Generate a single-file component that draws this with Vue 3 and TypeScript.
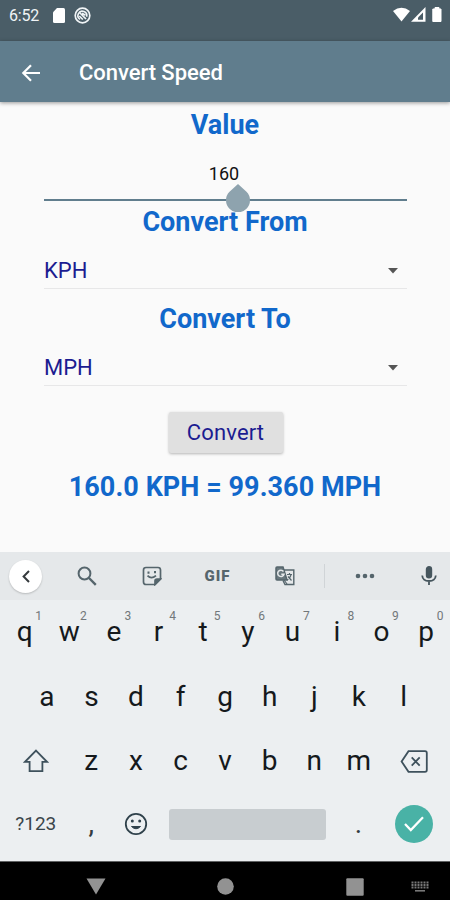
<script setup lang="ts">
import { ref } from 'vue'

interface Key {
  label: string
  hint?: string
}

const value = ref<string>('160')
const fromUnit = ref<string>('KPH')
const toUnit = ref<string>('MPH')
const result = ref<string>('160.0 KPH = 99.360 MPH')

const topRow: Key[] = [...'qwertyuiop'].map((label, i) => ({ label, hint: String((i + 1) % 10) }))
const homeRow: Key[] = [...'asdfghjkl'].map((label) => ({ label }))
const bottomRow: Key[] = [...'zxcvbnm'].map((label) => ({ label }))
</script>

<template>
  <div class="phone">
    <header class="status">
      <span class="clock">6:52</span>
      <svg class="sd" width="12" height="15" viewBox="0 0 12 15"><path d="M4 0h6.5Q12 0 12 1.500v12Q12 15 10.500 15h-9Q0 15 0 13.500V4.200z" fill="#fff" /></svg>
      <svg class="dnd" width="17" height="17" viewBox="0 0 17 17" fill="none" stroke="#f1f5f7">
        <circle cx="8.500" cy="8.500" r="7.300" stroke-width="1.700" />
        <path d="M6 12.300A4.400 4.400 0 1 1 12.600 9.800" stroke-width="1.600" />
        <path d="M5.500 5.500l6.500 6.500M8 6.300l3.500 2M5.300 9l3.500 3.500" stroke-width="1.700" />
      </svg>
      <span class="spacer"></span>
      <svg class="signals" width="50" height="16" viewBox="0 0 50 16">
        <path d="M0 4Q8.500-2.500 17 4L8.500 14.500z" fill="#fff" />
        <path d="M18 14.800L32.500 0v14.800z" fill="#fff" />
        <path d="M25 12.800V10.500l5-5v7.300z" fill="#4a5d67" />
        <path d="M39.800 2h2.200V.5h4V2H48v12.500h-8.200z" fill="#fff" stroke="#fff" stroke-linejoin="round" />
      </svg>
    </header>

    <div class="toolbar">
      <svg width="20" height="20" viewBox="0 0 20 20" fill="none" stroke="#fff" stroke-width="2.200"><path d="M19 10H2.500M10 2.200L2.300 10l7.700 7.800" /></svg>
      <h1>Convert Speed</h1>
    </div>

    <main class="form">
      <h2>Value</h2>
      <div class="input">
        <span>{{ value }}</span>
        <svg class="handle" width="24" height="28" viewBox="0 0 24 28"><path d="M12 0L20.500 7.800A12 12 0 1 1 3.500 7.800z" fill="#8ea3ae" /></svg>
      </div>
      <h2>Convert From</h2>
      <div class="select from">
        <span>{{ fromUnit }}</span>
        <svg width="10" height="6" viewBox="0 0 10 6"><path d="M0 0h10L5 5.500z" fill="#555" /></svg>
      </div>
      <h2>Convert To</h2>
      <div class="select">
        <span>{{ toUnit }}</span>
        <svg width="10" height="6" viewBox="0 0 10 6"><path d="M0 0h10L5 5.500z" fill="#555" /></svg>
      </div>
      <button class="convert" type="button">Convert</button>
      <p class="result">{{ result }}</p>
    </main>

    <section class="suggestions">
      <div class="tool collapse">
        <span class="bubble">
          <svg width="8" height="13" viewBox="0 0 8 13" fill="none" stroke="#353a3d" stroke-width="2"><path d="M7 1L1.600 6.500 7 12" /></svg>
        </span>
      </div>
      <div class="tool search">
        <svg width="20" height="20" viewBox="0 0 20 20" fill="none" stroke="#55656c" stroke-width="2"><circle cx="7.500" cy="7.500" r="5.900" /><path d="M12 12l6.800 6.800" stroke-width="2.400" /></svg>
      </div>
      <div class="tool sticker">
        <svg width="20" height="20" viewBox="0 0 20 20" fill="none" stroke="#55656c" stroke-width="1.700">
          <path d="M4 1.500h12Q18.500 1.500 18.500 4v9l-5.500 5.500H4Q1.500 18.500 1.500 16V4Q1.500 1.500 4 1.500z" />
          <path d="M13 18.500v-3.500q0-2 2-2h3.500z" fill="#55656c" />
          <path d="M5.500 9.700q3.800 4 8.500 0" />
          <path d="M6.500 5.500v2.200M13 5v2.200" stroke-width="2" />
        </svg>
      </div>
      <div class="tool gif">GIF</div>
      <div class="tool translate">
        <svg width="20" height="20" viewBox="0 0 20 20" fill="none" stroke="#55656c">
          <path d="M8.500 4H18.800V18.500H10L8 14.500" stroke-width="1.400" />
          <path d="M2 1h6l4 13H2Q1 14 1 13V2Q1 1 2 1z" fill="#68777d" stroke-width="1.500" />
          <path d="M8.500 5.500A3.200 3.200 0 1 0 9 8.200H6.300" stroke="#e5e8ea" stroke-width="1.500" />
          <path d="M12 8.500h5M14.500 7v1.500M16 9q-1 3.500-4 5M13 10.500l3.500 4M9 14l3 4" stroke-width="1.200" />
        </svg>
      </div>
      <span class="divider"></span>
      <div class="tool more">
        <svg width="20" height="6" viewBox="0 0 20 6" fill="#55656c"><circle cx="3" cy="3" r="2.300" /><circle cx="10" cy="3" r="2.300" /><circle cx="17" cy="3" r="2.300" /></svg>
      </div>
      <div class="tool mic">
        <svg width="16" height="20" viewBox="0 0 16 20" fill="none" stroke="#46565e" stroke-width="1.800"><rect x="5.700" y="1" width="4.600" height="10.500" rx="2.300" fill="#46565e" /><path d="M1.200 9.500q.5 5.500 6.800 5.500t6.800-5.500M8 15v4" /></svg>
      </div>
    </section>

    <section class="keyboard">
      <div class="row">
        <div v-for="key in topRow" :key="key.label" class="key">
          {{ key.label }}<sup>{{ key.hint }}</sup>
        </div>
      </div>
      <div class="row home">
        <div v-for="key in homeRow" :key="key.label" class="key">{{ key.label }}</div>
      </div>
      <div class="row">
        <div class="key wide">
          <svg width="26" height="24" viewBox="0 0 26 24" fill="none" stroke="#3e515c" stroke-width="1.800"><path d="M13 1.600L24 12.800h-4.600v9.400H6.600v-9.400H2z" /></svg>
        </div>
        <div v-for="key in bottomRow" :key="key.label" class="key">{{ key.label }}</div>
        <div class="key wide">
          <svg class="delete" width="28" height="23" viewBox="0 0 28 23" fill="none" stroke="#3e515c" stroke-width="1.800"><path d="M8.500 1.200H25q1.800 0 1.800 1.800v17q0 1.800-1.800 1.800H8.500L1.600 11.500zM11.700 7.300l8 8.400M19.700 7.300l-8 8.400" /></svg>
        </div>
      </div>
      <div class="row last">
        <div class="key wide symbols">?123</div>
        <div class="key comma">,</div>
        <div class="key">
          <svg width="24" height="24" viewBox="0 0 24 24" fill="none" stroke="#2f414b" stroke-width="1.800"><circle cx="12" cy="12" r="10.200" /><path d="M7.500 14.500q4.500 4.500 9 0z" fill="#2f414b" stroke-width="1" /><circle cx="8.300" cy="9" r="1.500" fill="#2f414b" stroke="none" /><circle cx="15.700" cy="9" r="1.500" fill="#2f414b" stroke="none" /></svg>
        </div>
        <div class="space"><span></span></div>
        <div class="key period">.</div>
        <div class="key wide">
          <span class="enter">
            <svg width="20" height="16" viewBox="0 0 20 16" fill="none" stroke="#fff" stroke-width="2.300"><path d="M1 8l5.800 6L19 1.300" /></svg>
          </span>
        </div>
      </div>
    </section>

    <nav class="navbar">
      <svg class="back" width="20" height="17" viewBox="0 0 20 17"><path d="M.5.500h19L10 16.500z" fill="#929292" /></svg>
      <svg class="home-btn" width="17" height="17" viewBox="0 0 17 17"><circle cx="8.500" cy="8.500" r="8.300" fill="#929292" /></svg>
      <svg class="recent" width="18" height="18" viewBox="0 0 18 18"><rect x=".3" y=".3" width="17.400" height="17.400" rx="1" fill="#929292" /></svg>
      <svg class="ime" width="18" height="11" viewBox="0 0 18 11" stroke="#777" fill="none"><path d="M.5 1.500h17M.5 4h17M.5 6.500h17" stroke-width="1.800" stroke-dasharray="2 1" /><path d="M4 9.800h10" stroke-width="1.600" /></svg>
    </nav>
  </div>
</template>

<style>
body {
  margin: 0;
  overflow: hidden;
}
</style>

<style scoped>
.phone {
  width: 450px;
  height: 900px;
  display: flex;
  flex-direction: column;
  background: #fafafa;
  font-family: Roboto, sans-serif;
  overflow: hidden;
}
svg {
  display: block;
  flex: none;
}
.status {
  height: 41px;
  flex: none;
  box-sizing: border-box;
  padding: 7px 8px 0 9px;
  display: flex;
  align-items: flex-start;
  background: #4a5d67;
}
.clock {
  width: 44px;
  font-size: 16px;
  line-height: 18px;
  letter-spacing: -0.2px;
  color: #f0f4f6;
}
.sd {
  margin-top: 1px;
}
.dnd {
  margin-left: 9px;
}
.spacer {
  flex: 1;
}
.signals {
  margin-right: -1px;
}
.toolbar {
  height: 61px;
  flex: none;
  z-index: 1;
  display: flex;
  align-items: center;
  padding: 2px 0 0 21px;
  box-sizing: border-box;
  gap: 38px;
  background: #607d8d;
  box-shadow: 0 1px 4px rgba(0, 0, 0, 0.4);
}
h1 {
  margin: 0;
  font-size: 22px;
  font-weight: 500;
  line-height: 28px;
  letter-spacing: -0.05px;
  color: #fff;
}
.form {
  height: 450px;
  flex: none;
  box-sizing: border-box;
  padding: 6px 43px 0 44px;
  display: flex;
  flex-direction: column;
}
h2,
.result {
  margin: 0 0 0 -1px;
  text-align: center;
  font-size: 27px;
  line-height: 34px;
  font-weight: 700;
  color: #1168cb;
  white-space: nowrap;
}
.result {
  letter-spacing: 0.06px;
}
.input {
  height: 59px;
  margin-bottom: 4px;
  box-sizing: border-box;
  border-bottom: 2px solid #607d8d;
  text-align: center;
  padding: 21px 3px 0 0;
  font-size: 18px;
  line-height: 22px;
  letter-spacing: 0.1px;
  color: #111;
  position: relative;
}
.handle {
  position: absolute;
  left: 182px;
  top: 42px;
}
.select {
  height: 50px;
  box-sizing: border-box;
  border-bottom: 1px solid #e7e7e8;
  display: flex;
  justify-content: space-between;
  align-items: center;
  padding: 14px 9px 0 0;
  font-size: 22px;
  color: #1c1c91;
}
.from {
  margin-bottom: 13px;
}
.convert {
  align-self: center;
  width: 114px;
  height: 41px;
  margin: 26px 0 17px;
  padding: 0;
  border: 0;
  border-radius: 2px;
  background: #e0e0e0;
  box-shadow: 0 1px 3px rgba(0, 0, 0, 0.28);
  font: 400 22px/41px Roboto, sans-serif;
  letter-spacing: 0.15px;
  color: #1c1c91;
}
.suggestions {
  height: 48px;
  flex: none;
  display: flex;
  align-items: center;
  background: #e5e8ea;
}
.tool {
  flex: none;
  display: flex;
  justify-content: center;
  align-items: center;
}
.collapse {
  width: 51px;
}
.bubble {
  width: 33px;
  height: 33px;
  border-radius: 50%;
  background: #fff;
  box-shadow: 0 1px 2px rgba(0, 0, 0, 0.2);
  display: flex;
  align-items: center;
  justify-content: center;
}
.search {
  width: 71px;
}
.sticker {
  width: 60px;
}
.gif {
  width: 71px;
  font-size: 15px;
  font-weight: 900;
  letter-spacing: 1px;
  color: #55656c;
}
.translate {
  width: 63px;
}
.divider {
  flex: none;
  width: 1px;
  height: 24px;
  margin-left: 8px;
  background: #d0d4d7;
}
.more {
  width: 79px;
}
.mic {
  width: 50px;
}
.keyboard {
  height: 261px;
  flex: none;
  box-sizing: border-box;
  padding: 0 1px 0 2.500px;
  background: #eceff1;
}
.row {
  height: 64.500px;
  display: flex;
}
.key {
  width: 44.600px;
  flex: none;
  display: flex;
  justify-content: center;
  align-items: center;
  position: relative;
  font-size: 28px;
  line-height: 64px;
  color: #15191c;
}
sup {
  position: absolute;
  right: 5px;
  top: 10px;
  font-size: 12px;
  line-height: 12px;
  color: #72777a;
}
.home {
  padding-left: 22px;
}
.wide {
  width: 66.500px;
}
.last {
  height: 61px;
}
.symbols {
  font-size: 19px;
  color: #3a454b;
}
.comma,
.period {
  color: #333c42;
}
.space {
  width: 178px;
  flex: none;
  display: flex;
  align-items: center;
  justify-content: center;
}
.space span {
  width: 157px;
  height: 31px;
  border-radius: 3px;
  background: #c8cdd0;
}
.enter {
  width: 38px;
  height: 38px;
  border-radius: 50%;
  background: #49b2a6;
  display: flex;
  align-items: center;
  justify-content: center;
}
.navbar {
  height: 39px;
  flex: none;
  box-sizing: border-box;
  border-top: 1px solid #606263;
  padding: 11px 21px 0 86px;
  display: flex;
  align-items: center;
  background: #000;
}
.home-btn {
  margin-left: 111px;
}
.recent {
  margin-left: 112px;
}
.ime {
  margin-left: auto;
}
</style>
